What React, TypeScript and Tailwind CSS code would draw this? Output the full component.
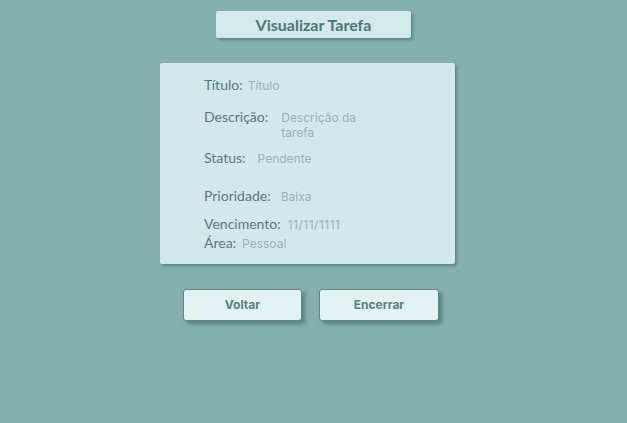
export default function App() {
  const label = "text-[14px] leading-[16px] text-[#527c7b]"
  const value = "text-[12px] leading-[15px] text-[#93b5b5] font-['Inter',sans-serif]"
  const button =
    "h-[32px] bg-[#e3f3f3] border border-[#5d8887] rounded-[3px] shadow-[3px_3px_4px_rgba(40,80,80,0.5)] text-[12px] font-bold text-[#56807f]"

  return (
    <div className="w-[627px] h-[423px] bg-[#84b0ae] flex flex-col items-center font-['Lato',sans-serif]">
      {/* Header */}
      <div className="mt-[11px] w-[195px] h-[27px] bg-[#d3e9ea] rounded-[2px] shadow-[2px_2px_3px_rgba(40,80,80,0.45)] flex items-center justify-center">
        <span className="text-[16px] font-bold text-[#4b7675]">Visualizar Tarefa</span>
      </div>

      {/* Card */}
      <div className="mt-[25px] mr-[12px] w-[295px] h-[201px] bg-[#d3e8ea] rounded-[2px] shadow-[2px_2px_3px_rgba(40,80,80,0.45)] pl-[44px] pt-[14px] flex flex-col">
        <div className="flex items-baseline">
          <span className={label}>Título:</span>
          <span className={`${value} ml-[5px]`}>Título</span>
        </div>
        <div className="flex items-baseline mt-[16px]">
          <span className={label}>Descrição:</span>
          <span className={`${value} ml-[13px] w-[82px]`}>Descrição da tarefa</span>
        </div>
        <div className="flex items-baseline mt-[10px]">
          <span className={label}>Status:</span>
          <span className={`${value} ml-[12px]`}>Pendente</span>
        </div>
        <div className="flex items-baseline mt-[22px]">
          <span className={label}>Prioridade:</span>
          <span className={`${value} ml-[10px]`}>Baixa</span>
        </div>
        <div className="flex items-baseline mt-[12px]">
          <span className={label}>Vencimento:</span>
          <span className={`${value} ml-[7px] tracking-[0.5px]`}>11/11/1111</span>
        </div>
        <div className="flex items-baseline mt-[3px]">
          <span className={label}>Área:</span>
          <span className={`${value} ml-[6px]`}>Pessoal</span>
        </div>
      </div>

      {/* Buttons */}
      <div className="mt-[25px] mr-[5px] flex gap-[17px] font-['Inter',sans-serif]">
        <button className={`${button} w-[119px]`}>Voltar</button>
        <button className={`${button} w-[120px]`}>Encerrar</button>
      </div>
    </div>
  )
}
